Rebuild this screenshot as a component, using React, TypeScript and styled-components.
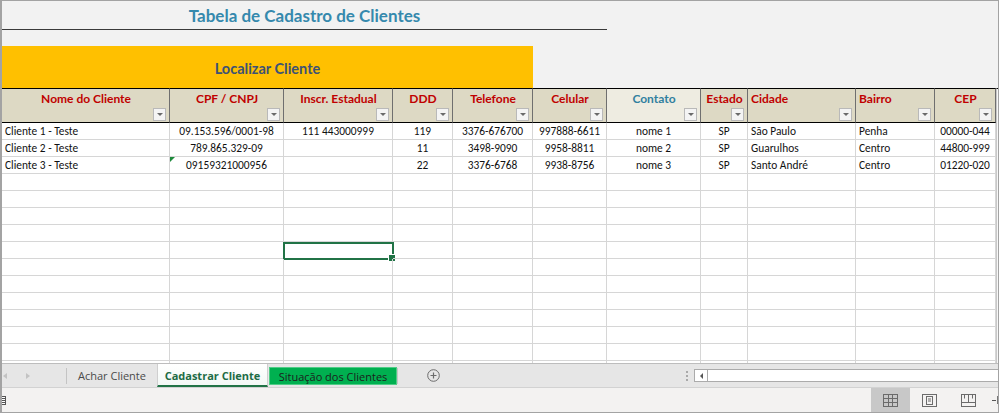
import React from 'react';
import styled, { createGlobalStyle } from 'styled-components';

const Global = createGlobalStyle`
  html, body { margin: 0; padding: 0; background: #ffffff; }
  body { font-family: Carlito, Lato, "Liberation Sans", sans-serif; }
  * { box-sizing: border-box; }
`;

const COLS = [168, 114, 109, 60, 80, 74, 94, 47, 108, 79, 61];

type Align = 'left' | 'center';

const Frame = styled.div`
  width: 999px;
  height: 413px;
  display: flex;
  flex-direction: column;
  background: #f2f2f2;
  border-top: 1px solid #a3a3a3;
  border-left: 2px solid #a3a3a3;
  border-right: 1px solid #a3a3a3;
  border-bottom: 1px solid #a3a3a3;
  overflow: hidden;
`;

const TitleArea = styled.div`
  height: 45px;
  flex-shrink: 0;
`;

const Title = styled.div`
  width: 605px;
  height: 29px;
  border-bottom: 1px solid #3a3a3a;
  display: flex;
  align-items: center;
  justify-content: center;
  font-family: Lato, sans-serif;
  font-size: 17px;
  font-weight: 700;
  color: #3589ad;
  padding-top: 1px;
`;

const SearchRow = styled.div`
  height: 42px;
  flex-shrink: 0;
  display: flex;
`;

const SearchBar = styled.div`
  width: 531px;
  background: #ffc000;
  display: flex;
  align-items: center;
  justify-content: center;
  font-family: Lato, sans-serif;
  font-size: 14.5px;
  font-weight: 700;
  color: #3d5275;
  padding-top: 2px;
`;

const GridArea = styled.div`
  flex: 1;
  min-height: 0;
  display: flex;
  background: #ffffff;
  overflow: hidden;
`;

const Grid = styled.div`
  display: grid;
  grid-template-columns: ${COLS.map((c) => c + 'px').join(' ')};
  grid-template-rows: 35px;
  grid-auto-rows: 17px;
  align-content: start;
`;

const RightStrip = styled.div`
  flex: 1;
  border-top: 1px solid #000;
  background: #f7f7f7;
  border-left: 1px solid #c8c8c8;
`;

const HeaderCell = styled.div<{ $align: Align; $light?: boolean }>`
  display: flex;
  flex-direction: column;
  background: ${(p) => (p.$light ? '#eeece1' : '#ddd9c4')};
  border-top: 1px solid #000;
  border-bottom: 1px solid #000;
  border-right: 1px solid #6f6f6f;
  padding: 2px 2px 1px 3px;
  font-family: Lato, sans-serif;
  font-size: 12px;
  font-weight: 700;
  line-height: 15px;
  color: ${(p) => (p.$light ? '#31809f' : '#c00000')};
  text-align: ${(p) => p.$align};
  white-space: nowrap;
  overflow: hidden;
`;

const FilterButton = styled.div`
  margin-top: auto;
  align-self: flex-end;
  width: 13px;
  height: 13px;
  background: #f4f4f4;
  border: 1px solid #b9b9b9;
  display: flex;
  align-items: center;
  justify-content: center;
  margin-right: 1px;
  &::after {
    content: '';
    border-left: 3px solid transparent;
    border-right: 3px solid transparent;
    border-top: 3px solid #6a6a6a;
  }
`;

const Cell = styled.div<{ $align: Align; $flag?: boolean }>`
  position: relative;
  border-right: 1px solid #d6d6d6;
  border-bottom: 1px solid #d6d6d6;
  padding: 1px 3px 0 3px;
  font-size: 11.4px;
  line-height: 15px;
  color: #111111;
  text-align: ${(p) => p.$align};
  white-space: nowrap;
  overflow: visible;
  &::before {
    content: ${(p) => (p.$flag ? "''" : 'none')};
    position: absolute;
    left: 0;
    top: 0;
    border-top: 5px solid #1e8a3c;
    border-right: 5px solid transparent;
  }
`;

const Selection = styled.div`
  position: absolute;
  left: -1px;
  top: 0;
  right: -2px;
  bottom: -2px;
  border: 2px solid #217346;
  &::after {
    content: '';
    position: absolute;
    right: -4px;
    bottom: -4px;
    width: 6px;
    height: 6px;
    background: #217346;
    border: 1px solid #ffffff;
  }
`;

const TabBar = styled.div`
  height: 25px;
  flex-shrink: 0;
  display: flex;
  align-items: stretch;
  background: #e6e6e6;
  border-top: 1px solid #bdbdbd;
  border-bottom: 1px solid #d2d2d2;
  font-family: "Open Sans", "Liberation Sans", sans-serif;
  font-size: 11px;
`;

const NavArea = styled.div`
  width: 64px;
  display: flex;
  align-items: center;
  gap: 19px;
  padding-left: 1px;
`;

const NavArrow = styled.span<{ $dir: 'l' | 'r' }>`
  width: 0;
  height: 0;
  border-top: 3px solid transparent;
  border-bottom: 3px solid transparent;
  ${(p) => (p.$dir === 'l' ? 'border-right: 4px solid #c3c3c3;' : 'border-left: 4px solid #c3c3c3;')}
`;

const Sep = styled.div`
  width: 1px;
  background: #c4c4c4;
  margin: 4px 0 3px;
`;

const Tab = styled.div<{ $w: number }>`
  width: ${(p) => p.$w}px;
  display: flex;
  align-items: center;
  justify-content: center;
  color: #4a4a4a;
`;

const ActiveTab = styled(Tab)`
  background: linear-gradient(#ffffff, #f3f8f5);
  color: #1d6b45;
  font-weight: 700;
  border-bottom: 2px solid #217346;
  border-left: 1px solid #cfcfcf;
  border-right: 1px solid #cfcfcf;
  padding-top: 2px;
`;

const ColorTab = styled(Tab)`
  background: #00b050;
  color: #1c1c1c;
  margin: 3px 0 2px 1px;
  border: 1px solid #4fcc86;
`;

const AddButton = styled.div`
  width: 70px;
  display: flex;
  align-items: center;
  justify-content: center;
`;

const Spacer = styled.div`
  flex: 1;
`;

const Dots = styled.div`
  width: 14px;
  display: flex;
  flex-direction: column;
  align-items: center;
  justify-content: center;
  gap: 2px;
  & > span {
    width: 2px;
    height: 2px;
    background: #a9a9a9;
  }
`;

const Scroll = styled.div`
  width: 304px;
  display: flex;
  align-items: center;
`;

const ScrollTrack = styled.div`
  flex: 1;
  height: 13px;
  display: flex;
  background: #ffffff;
  border: 1px solid #ababab;
  border-right: none;
`;

const ScrollArrow = styled.div`
  width: 13px;
  border-right: 1px solid #ababab;
  display: flex;
  align-items: center;
  justify-content: center;
  &::after {
    content: '';
    border-top: 3px solid transparent;
    border-bottom: 3px solid transparent;
    border-right: 3px solid #555;
  }
`;

const StatusBar = styled.div`
  height: 24px;
  flex-shrink: 0;
  display: flex;
  align-items: stretch;
  background: #f3f2f1;
`;

const MacroIcon = styled.div`
  width: 4px;
  height: 9px;
  margin-top: 8px;
  border: 1px solid #555;
  border-left: none;
  background: repeating-linear-gradient(#fff 0 1px, #555 1px 2px);
`;

const ViewButton = styled.div<{ $active?: boolean; $w: number }>`
  width: ${(p) => p.$w}px;
  display: flex;
  align-items: center;
  justify-content: center;
  background: ${(p) => (p.$active ? '#c8c8c8' : 'transparent')};
`;

const ZoomStub = styled.div`
  width: 10px;
  display: flex;
  align-items: center;
  justify-content: flex-end;
  gap: 1px;
  & > span:first-child {
    width: 4px;
    height: 1px;
    background: #555;
  }
  & > span:last-child {
    width: 1px;
    height: 8px;
    background: #777;
  }
`;

const headers: { label: string; align: Align; light?: boolean }[] = [
  { label: 'Nome do Cliente', align: 'center' },
  { label: 'CPF / CNPJ', align: 'center' },
  { label: 'Inscr. Estadual', align: 'center' },
  { label: 'DDD', align: 'center' },
  { label: 'Telefone', align: 'center' },
  { label: 'Celular', align: 'center' },
  { label: 'Contato', align: 'center', light: true },
  { label: 'Estado', align: 'center' },
  { label: 'Cidade', align: 'left' },
  { label: 'Bairro', align: 'left' },
  { label: 'CEP', align: 'center' },
];

const aligns: Align[] = ['left', 'center', 'center', 'center', 'center', 'center', 'center', 'center', 'left', 'left', 'center'];

const rows: string[][] = [
  ['Cliente 1 - Teste', '09.153.596/0001-98', '111 443000999', '119', '3376-676700', '997888-6611', 'nome 1', 'SP', 'São Paulo', 'Penha', '00000-044'],
  ['Cliente 2 - Teste', '789.865.329-09', '', '11', '3498-9090', '9958-8811', 'nome 2', 'SP', 'Guarulhos', 'Centro', '44800-999'],
  ['Cliente 3 - Teste', '09159321000956', '', '22', '3376-6768', '9938-8756', 'nome 3', 'SP', 'Santo André', 'Centro', '01220-020'],
];

const TOTAL_ROWS = 16;

const GridIcon = () => (
  <svg width="15" height="13" viewBox="0 0 15 13">
    <rect x="0.5" y="0.5" width="14" height="12" fill="none" stroke="#6b6b6b" />
    <path d="M5.5 0.5V12.5M9.5 0.5V12.5M0.5 4.5H14.5M0.5 8.5H14.5" stroke="#6b6b6b" />
  </svg>
);

const PageIcon = () => (
  <svg width="15" height="13" viewBox="0 0 15 13">
    <rect x="0.5" y="0.5" width="14" height="12" fill="none" stroke="#6b6b6b" />
    <rect x="4.5" y="2.5" width="6" height="8" fill="none" stroke="#6b6b6b" />
    <path d="M6 5H9M6 7H9" stroke="#6b6b6b" />
  </svg>
);

const BreakIcon = () => (
  <svg width="15" height="13" viewBox="0 0 15 13">
    <rect x="0.5" y="0.5" width="14" height="12" fill="none" stroke="#6b6b6b" />
    <path d="M7.5 0.5V8.5M0.5 8.5H14.5M3.5 0.5V4.5M11.5 0.5V4.5" stroke="#6b6b6b" />
  </svg>
);

const PlusIcon = () => (
  <svg width="13" height="13" viewBox="0 0 13 13">
    <circle cx="6.5" cy="6.5" r="5.8" fill="none" stroke="#6b6b6b" strokeWidth="1" />
    <path d="M6.5 3.5V9.5M3.5 6.5H9.5" stroke="#6b6b6b" strokeWidth="1.2" />
  </svg>
);

export default function App() {
  return (
    <>
      <Global />
      <Frame>
        <TitleArea>
          <Title>Tabela de Cadastro de Clientes</Title>
        </TitleArea>
        <SearchRow>
          <SearchBar>Localizar Cliente</SearchBar>
        </SearchRow>
        <GridArea>
          <Grid>
            {headers.map((h) => (
              <HeaderCell key={h.label} $align={h.align} $light={h.light}>
                <span>{h.label}</span>
                <FilterButton />
              </HeaderCell>
            ))}
            {Array.from({ length: TOTAL_ROWS }).map((_, r) =>
              COLS.map((_, c) => {
                const value = rows[r]?.[c] ?? '';
                return (
                  <Cell key={`${r}-${c}`} $align={aligns[c]} $flag={r === 2 && c === 1}>
                    {value}
                    {r === 7 && c === 2 && <Selection />}
                  </Cell>
                );
              })
            )}
          </Grid>
          <RightStrip />
        </GridArea>
        <TabBar>
          <NavArea>
            <NavArrow $dir="l" />
            <NavArrow $dir="r" />
          </NavArea>
          <Sep />
          <Tab $w={90}>Achar Cliente</Tab>
          <ActiveTab $w={111}>Cadastrar Cliente</ActiveTab>
          <ColorTab $w={128}>Situação dos Clientes</ColorTab>
          <Sep />
          <AddButton>
            <PlusIcon />
          </AddButton>
          <Spacer />
          <Dots>
            <span />
            <span />
            <span />
          </Dots>
          <Scroll>
            <ScrollTrack>
              <ScrollArrow />
            </ScrollTrack>
          </Scroll>
        </TabBar>
        <StatusBar>
          <MacroIcon />
          <Spacer />
          <ViewButton $active $w={39}>
            <GridIcon />
          </ViewButton>
          <ViewButton $w={39}>
            <PageIcon />
          </ViewButton>
          <ViewButton $w={39}>
            <BreakIcon />
          </ViewButton>
          <ZoomStub>
            <span />
            <span />
          </ZoomStub>
        </StatusBar>
      </Frame>
    </>
  );
}
